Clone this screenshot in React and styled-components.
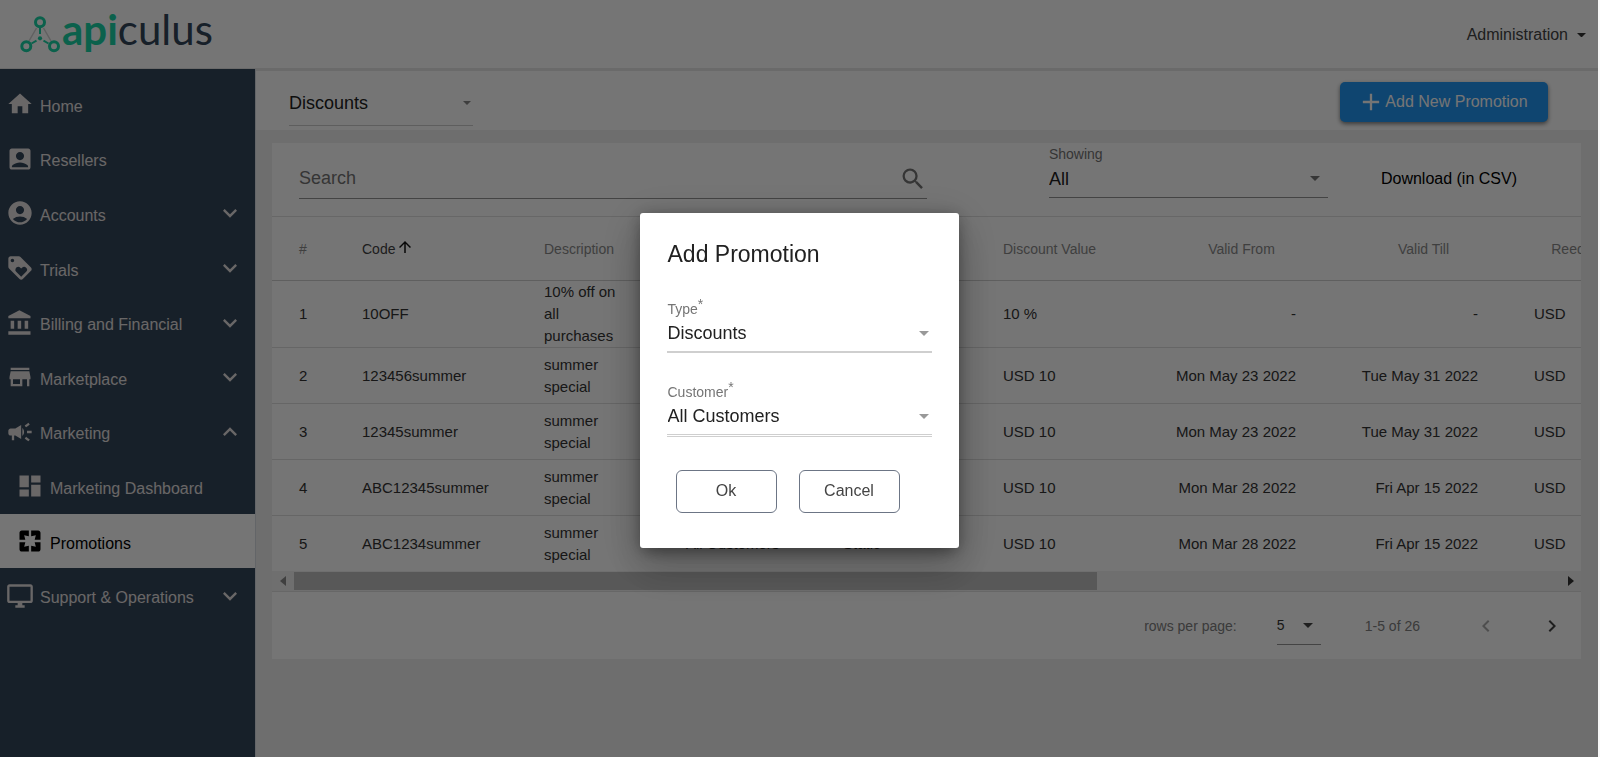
import React from "react";
import styled, { createGlobalStyle } from "styled-components";
import {
  MdHome,
  MdAccountBox,
  MdAccountCircle,
  MdLoyalty,
  MdCampaign,
  MdDashboard,
  MdOutlineDesktopWindows,
  MdExpandMore,
  MdExpandLess,
  MdAdd,
  MdSearch,
  MdArrowUpward,
  MdChevronLeft,
  MdChevronRight,
} from "react-icons/md";

const GlobalStyle = createGlobalStyle`
  * { box-sizing: border-box; }
  body {
    margin: 0;
    font-family: "Liberation Sans", Arial, sans-serif;
    font-size: 16px;
    color: #212121;
  }
  button, input, select { font: inherit; color: inherit; }
`;

const Page = styled.div`
  display: flex;
  flex-direction: column;
  min-height: 100vh;
  border-right: 2px solid #f8f8f8;
  background: #f0f0f0;
`;

const Header = styled.header`
  display: flex;
  align-items: center;
  justify-content: space-between;
  height: 69px;
  padding: 0 12px 0 20px;
  background: #fff;
  border-bottom: 1px solid #e6e6e6;
`;

const Brand = styled.a`
  display: flex;
  align-items: center;
  color: #34465a;
  text-decoration: none;
`;

const BrandName = styled.span`
  padding-bottom: 10px;
  font-family: Lato, sans-serif;
  font-size: 42px;
  line-height: 48px;

  b {
    color: #1ad3a5;
  }
`;

const AccountButton = styled.button`
  display: flex;
  align-items: center;
  gap: 9px;
  padding: 2px 0 0;
  border: 0;
  background: none;
  color: #444;
`;

const Body = styled.div`
  display: flex;
  flex: 1;
`;

const Sidebar = styled.aside`
  flex: none;
  width: 256px;
  padding-top: 8px;
  background: #34465a;
  border-right: 1px solid #d8dde2;
`;

const NavList = styled.ul`
  display: grid;
  grid-template-rows: repeat(10, 1fr);
  height: 546px;
  margin: 0;
  padding: 0;
  list-style: none;
`;

const NavItem = styled.li`
  display: flex;
`;

const NavLink = styled.a`
  display: flex;
  flex: 1;
  align-items: center;
  gap: 6px;
  padding: 0 11px 0 ${(p) => (p.$nested ? 16 : 6)}px;
  background: ${(p) => (p.$active ? "#fff" : "transparent")};
  color: ${(p) => (p.$active ? "#000" : "#e4e0e0")};
  font-size: 16px;
  text-decoration: none;

  span {
    flex: 1;
    padding-top: 5px;
  }
`;

const Main = styled.main`
  flex: 1;
  min-width: 0;
`;

const TitleBar = styled.div`
  display: flex;
  align-items: center;
  justify-content: space-between;
  height: 61px;
  padding: 3px 50px 0 33px;
  border-top: 2px solid #e6e6e6;
  background: #fff;
`;

const AddButton = styled.button`
  display: flex;
  align-items: center;
  justify-content: center;
  width: 208px;
  height: 40px;
  padding: 0 3px 0 0;
  border: 0;
  border-radius: 5px;
  background: #2196f3;
  color: #fff;
  box-shadow: 0 2px 4px rgba(0, 0, 0, 0.5);
`;

const SelectBox = styled.div`
  display: grid;
  align-items: center;
  width: ${(p) => p.$width || "100%"};
  height: ${(p) => p.$height || 35}px;
  padding: ${(p) => p.$pad || "0 0 3px"};
  border-bottom: ${(p) => p.$line || "1px solid #949494"};

  select {
    grid-area: 1 / 1;
    width: 100%;
    padding: 0;
    border: 0;
    appearance: none;
    background: none;
    outline: none;
    font-size: ${(p) => p.$size || 18}px;
  }

  svg {
    grid-area: 1 / 1;
    justify-self: end;
    margin-right: ${(p) => p.$inset || 8}px;
    pointer-events: none;
  }
`;

const Card = styled.section`
  margin: 13px 17px 0 16px;
  background: #fff;
`;

const Toolbar = styled.div`
  display: flex;
  align-items: flex-end;
  height: 74px;
  padding: 0 64px 17px 27px;
  border-bottom: 1px solid #e0e0e0;
`;

const SearchField = styled.label`
  display: flex;
  flex: 1;
  align-items: center;
  height: 42px;
  padding-top: 2px;
  border-bottom: 1px solid #949494;
  color: #757575;

  input {
    flex: 1;
    min-width: 0;
    padding: 0;
    border: 0;
    background: none;
    outline: none;
    font-size: 18px;
  }

  input::placeholder {
    color: #757575;
    opacity: 1;
  }
`;

const ShowingField = styled.div`
  width: 279px;
  margin: 0 53px 1px 122px;
`;

const FieldLabel = styled.label`
  display: block;
  color: #757575;
  font-size: 14px;
  line-height: 18px;

  sup {
    line-height: 0;
    font-size: 14px;
    vertical-align: 5px;
  }
`;

const LinkButton = styled.button`
  height: 40px;
  padding: 0;
  border: 0;
  background: none;
  color: #000;
`;

const TableViewport = styled.div`
  overflow: hidden;
`;

const Table = styled.table`
  width: 1377px;
  table-layout: fixed;
  border-collapse: separate;
  border-spacing: 0;
  color: #333;
  font-size: 15px;
  line-height: 22px;
`;

const HeadCell = styled.th`
  height: 64px;
  padding: 0 0 0 ${(p) => (p.$numeric ? 15 : 27)}px;
  border-bottom: 1px solid #cfcfcf;
  color: ${(p) => (p.$sorted ? "#424242" : "#8a8a8a")};
  font-size: 14px;
  font-weight: 400;
  text-align: ${(p) => (p.$numeric ? "center" : "left")};
  white-space: nowrap;

  svg {
    margin-left: 1px;
    color: #111;
    vertical-align: -2px;
  }
`;

const Cell = styled.td`
  height: 56px;
  padding: ${(p) => (p.$numeric ? "0 29px 0 0" : "0 27px")};
  border-bottom: 1px solid #dedede;
  text-align: ${(p) => (p.$numeric ? "right" : "left")};
`;

const Row = styled.tr`
  &:last-child td {
    height: 55px;
    border-bottom: 0;
  }
`;

const ScrollTrack = styled.div`
  display: flex;
  align-items: center;
  justify-content: space-between;
  height: 21px;
  padding: 0 7px 0 8px;
  border-bottom: 1px solid #e0e0e0;
  background: #f1f1f1;
`;

const ScrollRail = styled.div`
  flex: 1;
  margin: 0 8px;
`;

const ScrollThumb = styled.div`
  width: 63.4%;
  height: 18px;
  background: #c1c1c1;
`;

const Pager = styled.footer`
  display: flex;
  align-items: center;
  justify-content: flex-end;
  height: 67px;
  padding-right: 17px;
  color: #808080;
  font-size: 14px;
`;

const PageSize = styled.div`
  margin: 0 44px 0 40px;
  padding-top: 3px;
  color: #333;
`;

const PagerButtons = styled.div`
  display: flex;
  gap: 42px;
  margin-left: 54px;
`;

const IconButton = styled.button`
  display: flex;
  padding: 0;
  border: 0;
  background: none;
  color: ${(p) => (p.disabled ? "#aaa" : "#444")};
`;

const Backdrop = styled.div`
  position: fixed;
  inset: 0 2px 0 0;
  display: flex;
  align-items: center;
  justify-content: center;
  padding-top: 4px;
  background: rgba(0, 0, 0, 0.54);
`;

const Dialog = styled.form`
  display: flex;
  flex-direction: column;
  gap: 30px;
  width: 319px;
  padding: 25px 27px 35px;
  border-radius: 3px;
  background: #fff;
  box-shadow: 0 11px 15px -7px rgba(0, 0, 0, 0.2),
    0 24px 38px 3px rgba(0, 0, 0, 0.14), 0 9px 46px 8px rgba(0, 0, 0, 0.12),
    0 2px 16px rgba(0, 0, 0, 0.3);

  h2, label, select {
    padding-left: 1px;
  }
`;

const DialogTitle = styled.h2`
  margin: 0;
  font-size: 23px;
  font-weight: 400;
  line-height: 32px;
`;

const Actions = styled.div`
  display: flex;
  gap: 22px;
  padding: 3px 0 0 9px;
`;

const OutlineButton = styled.button`
  width: 101px;
  height: 43px;
  padding: 0 0 1px;
  border: 1px solid #6c7585;
  border-radius: 6px;
  background: #fff;
  color: #444;
`;

const Caret = ({ size = 10, color = "#777" }) => (
  <svg width={size} height={size / 2} viewBox="0 0 10 5" aria-hidden="true">
    <path d="M0 0h10L5 5z" fill={color} />
  </svg>
);

const ScrollArrow = ({ right }) => (
  <svg width="6" height="10" viewBox="0 0 6 10" aria-hidden="true">
    <path d={right ? "M0 0v10l6-5z" : "M6 0v10L0 5z"} fill={right ? "#333" : "#8a8a8a"} />
  </svg>
);

const glyph = (d) => ({ size }) => (
  <svg width={size} height={size} viewBox="0 0 24 24" fill="currentColor" aria-hidden="true">
    <path d={d} />
  </svg>
);

const BankIcon = glyph(
  "M4 10v7h3v-7H4zm6 0v7h3v-7h-3zM2 22h19v-3H2v3zm14-12v7h3v-7h-3zm-4.500-9L2 6v2h19V6l-9.500-5z"
);
const StoreIcon = glyph(
  "M20 4H4v2h16V4zm1 10v-2l-1-5H4l-1 5v2h1v6h10v-6h4v6h2v-6h1zm-9 4H6v-4h6v4z"
);
const PagesIcon = glyph(
  "M3 5v6h5L7 7l4 1V3H5c-1.100 0-2 .9-2 2zm5 8H3v6c0 1.100.9 2 2 2h6v-5l-4 1 1-4zm9 4l-4-1v5h6c1.100 0 2-.9 2-2v-6h-5l1 4zm2-14h-6v5l4-1-1 4h5V5c0-1.100-.9-2-2-2z"
);

const LogoMark = () => (
  <svg width="42" height="38" viewBox="0 0 42 38" fill="none" aria-hidden="true">
    <path d="M16.500 13 9 26M23.500 13 31 26" stroke="#d2d2d2" strokeWidth="1.500" />
    <path d="M20 13v6M11.500 28.500l5-2.800M28.500 28.500l-5-2.800" stroke="#1ad3a5" strokeWidth="2" />
    <circle cx="20" cy="23.300" r="2.100" fill="#1ad3a5" />
    <g stroke="#1ad3a5" strokeWidth="3">
      <circle cx="20" cy="7.200" r="4.500" />
      <circle cx="6.300" cy="31.200" r="4.500" />
      <circle cx="34" cy="31.200" r="4.500" />
    </g>
  </svg>
);

const NAV = [
  { label: "Home", icon: MdHome },
  { label: "Resellers", icon: MdAccountBox },
  { label: "Accounts", icon: MdAccountCircle, group: true },
  { label: "Trials", icon: MdLoyalty, group: true },
  { label: "Billing and Financial", icon: BankIcon, group: true },
  { label: "Marketplace", icon: StoreIcon, group: true },
  { label: "Marketing", icon: MdCampaign, group: true, open: true },
  { label: "Marketing Dashboard", icon: MdDashboard, nested: true },
  { label: "Promotions", icon: PagesIcon, nested: true, active: true },
  { label: "Support & Operations", icon: MdOutlineDesktopWindows, group: true },
];

const COLUMNS = [
  { label: "#", width: 63 },
  { label: "Code", width: 182, sorted: true },
  { label: "Description", width: 142 },
  { label: "Customer", width: 157 },
  { label: "Type", width: 160 },
  { label: "Discount Value", width: 167 },
  { label: "Valid From", width: 182, numeric: true },
  { label: "Valid Till", width: 182, numeric: true },
  { label: "Reedemed", width: 142, numeric: true },
];

const ROWS = [
  ["10OFF", "10% off on all purchases", "10 %", "-", "-"],
  ["123456summer", "summer special", "USD 10", "Mon May 23 2022", "Tue May 31 2022"],
  ["12345summer", "summer special", "USD 10", "Mon May 23 2022", "Tue May 31 2022"],
  ["ABC12345summer", "summer special", "USD 10", "Mon Mar 28 2022", "Fri Apr 15 2022"],
  ["ABC1234summer", "summer special", "USD 10", "Mon Mar 28 2022", "Fri Apr 15 2022"],
];

export default function App() {
  return (
    <>
      <GlobalStyle />
      <Page>
        <Header>
          <Brand href="#home">
            <LogoMark />
            <BrandName>
              <b>api</b>culus
            </BrandName>
          </Brand>
          <AccountButton type="button">
            Administration
            <Caret size={9} color="#333" />
          </AccountButton>
        </Header>
        <Body>
          <Sidebar>
            <nav>
              <NavList>
                {NAV.map(({ label, icon: Icon, group, open, nested, active }) => (
                  <NavItem key={label}>
                    <NavLink href="#nav" $nested={nested} $active={active}>
                      <Icon size={28} />
                      <span>{label}</span>
                      {group && (open ? <MdExpandLess size={28} /> : <MdExpandMore size={28} />)}
                    </NavLink>
                  </NavItem>
                ))}
              </NavList>
            </nav>
          </Sidebar>
          <Main>
            <TitleBar>
              <SelectBox $width="184px" $height={48} $pad="3px 0 0" $inset={2} $line="1px solid #ccc">
                <select aria-label="Promotion type" defaultValue="Discounts">
                  <option>Discounts</option>
                </select>
                <Caret size={8} color="#888" />
              </SelectBox>
              <AddButton type="button">
                <MdAdd size={28} />
                Add New Promotion
              </AddButton>
            </TitleBar>
            <Card>
              <Toolbar>
                <SearchField>
                  <input type="text" placeholder="Search" aria-label="Search" />
                  <MdSearch size={28} />
                </SearchField>
                <ShowingField>
                  <FieldLabel htmlFor="showing">Showing</FieldLabel>
                  <SelectBox>
                    <select id="showing" defaultValue="All">
                      <option>All</option>
                    </select>
                    <Caret />
                  </SelectBox>
                </ShowingField>
                <LinkButton type="button">Download (in CSV)</LinkButton>
              </Toolbar>
              <TableViewport>
                <Table>
                  <colgroup>
                    {COLUMNS.map((c) => (
                      <col key={c.label} width={c.width} />
                    ))}
                  </colgroup>
                  <thead>
                    <tr>
                      {COLUMNS.map((c) => (
                        <HeadCell key={c.label} $numeric={c.numeric} $sorted={c.sorted}>
                          {c.label}
                          {c.sorted && <MdArrowUpward size={18} />}
                        </HeadCell>
                      ))}
                    </tr>
                  </thead>
                  <tbody>
                    {ROWS.map(([code, description, value, from, till], i) => (
                      <Row key={code}>
                        <Cell>{i + 1}</Cell>
                        <Cell>{code}</Cell>
                        <Cell>{description}</Cell>
                        <Cell>All Customers</Cell>
                        <Cell>Static</Cell>
                        <Cell>{value}</Cell>
                        <Cell $numeric>{from}</Cell>
                        <Cell $numeric>{till}</Cell>
                        <Cell>USD</Cell>
                      </Row>
                    ))}
                  </tbody>
                </Table>
              </TableViewport>
              <ScrollTrack>
                <ScrollArrow />
                <ScrollRail>
                  <ScrollThumb />
                </ScrollRail>
                <ScrollArrow right />
              </ScrollTrack>
              <Pager>
                <label htmlFor="page-size">rows per page:</label>
                <PageSize>
                  <SelectBox $width="44px" $size={14}>
                    <select id="page-size" defaultValue="5">
                      <option>5</option>
                    </select>
                    <Caret color="#444" />
                  </SelectBox>
                </PageSize>
                <span>1-5 of 26</span>
                <PagerButtons>
                  <IconButton type="button" disabled aria-label="Previous page">
                    <MdChevronLeft size={24} />
                  </IconButton>
                  <IconButton type="button" aria-label="Next page">
                    <MdChevronRight size={24} />
                  </IconButton>
                </PagerButtons>
              </Pager>
            </Card>
          </Main>
        </Body>
      </Page>
      <Backdrop>
        <Dialog role="dialog" aria-labelledby="dialog-title" onSubmit={(e) => e.preventDefault()}>
          <DialogTitle id="dialog-title">Add Promotion</DialogTitle>
          <div>
            <FieldLabel htmlFor="type">
              Type<sup>*</sup>
            </FieldLabel>
            <SelectBox $inset={3} $line="2px solid #cfcfcf">
              <select id="type" defaultValue="Discounts">
                <option>Discounts</option>
              </select>
              <Caret color="#999" />
            </SelectBox>
          </div>
          <div>
            <FieldLabel htmlFor="customer">
              Customer<sup>*</sup>
            </FieldLabel>
            <SelectBox $height={36} $inset={3} $line="3px double #cfcfcf">
              <select id="customer" defaultValue="All Customers">
                <option>All Customers</option>
              </select>
              <Caret color="#999" />
            </SelectBox>
          </div>
          <Actions>
            <OutlineButton type="submit">Ok</OutlineButton>
            <OutlineButton type="button">Cancel</OutlineButton>
          </Actions>
        </Dialog>
      </Backdrop>
    </>
  );
}
